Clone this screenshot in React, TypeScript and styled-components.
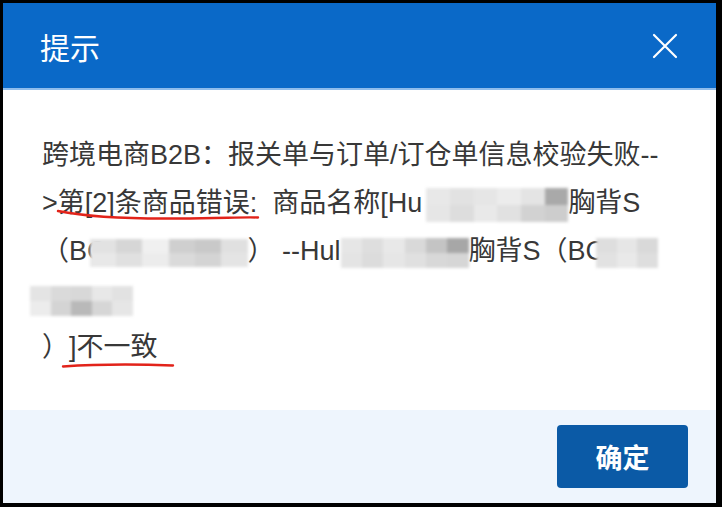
import React from 'react';
import styled, { createGlobalStyle } from 'styled-components';

const GlobalStyle = createGlobalStyle`
  html, body {
    margin: 0;
    padding: 0;
    background: #000;
  }
  #root {
    display: flex;
  }
`;

const Dialog = styled.section`
  margin: 3px 6px 4px 3px;
  width: 713px;
  height: 500px;
  background: #fff;
  display: flex;
  flex-direction: column;
  font-family: "Liberation Sans", "Noto Sans CJK SC", sans-serif;
`;

const Header = styled.header`
  height: 85px;
  flex: none;
  background: #0a69c8;
  border-bottom: 2px solid #8fbdec;
  display: flex;
  align-items: center;
  justify-content: space-between;
  padding: 0 38px 0 37px;
`;

const Title = styled.h2`
  margin: 0;
  color: #fff;
  font-family: "Noto Sans CJK SC", sans-serif;
  font-weight: 400;
  font-size: 30px;
  line-height: 1;
`;

const CloseButton = styled.button`
  border: 0;
  padding: 0;
  background: transparent;
  width: 26px;
  height: 26px;
  display: flex;
  align-items: center;
  justify-content: center;
  cursor: pointer;
`;

const Body = styled.div`
  flex: 1;
  padding: 41px 30px 0 39px;
  color: #383838;
  font-size: 27px;
  line-height: 48px;
  text-spacing-trim: space-all;
`;

const Line = styled.div`
  white-space: nowrap;
`;

const Mark = styled.span`
  position: relative;
`;

const Scribble = styled.svg<{ $left: number; $top: number }>`
  position: absolute;
  left: ${({ $left }) => $left}px;
  top: calc(100% + ${({ $top }) => $top}px);
  overflow: visible;
  pointer-events: none;
`;

const Blur = styled.span<{ $w: number; $h: number; $cols: number; $shift?: number }>`
  display: inline-grid;
  grid-template-columns: repeat(${({ $cols }) => $cols}, 1fr);
  grid-template-rows: 1fr 1fr;
  width: ${({ $w }) => $w}px;
  height: ${({ $h }) => $h}px;
  margin-left: ${({ $shift }) => $shift || 0}px;
  vertical-align: middle;
  filter: blur(1.4px);
`;

const Cell = styled.span<{ $c: string }>`
  background: #${({ $c }) => $c};
`;

const Footer = styled.footer`
  height: 93px;
  flex: none;
  background: #eef5fd;
  display: flex;
  align-items: center;
  justify-content: flex-end;
  padding-right: 28px;
`;

const Confirm = styled.button`
  width: 131px;
  height: 63px;
  border: 0;
  border-radius: 4px;
  background: #0b5aa6;
  color: #fff;
  font-family: "Noto Sans CJK SC", sans-serif;
  font-size: 27px;
  font-weight: 700;
  cursor: pointer;
`;

const Pixelated = ({ w, h = 30, shift, cells }: { w: number; h?: number; shift?: number; cells: string }) => {
  const list = cells.split(' ');
  return (
    <Blur $w={w} $h={h} $cols={list.length / 2} $shift={shift}>
      {list.map((c, i) => <Cell key={i} $c={c} />)}
    </Blur>
  );
};

const App = () => (
  <>
    <GlobalStyle />
    <Dialog>
      <Header>
        <Title>提示</Title>
        <CloseButton aria-label="关闭">
          <svg width="26" height="26" viewBox="0 0 26 26">
            <path d="M2 2 L24 24 M24 2 L2 24" stroke="#fff" strokeWidth="2.2" strokeLinecap="round" />
          </svg>
        </CloseButton>
      </Header>

      <Body>
        <Line>跨境电商B2B：报关单与订单/订仓单信息校验失败--</Line>
        <Line>
          &gt;
          <Mark>
            第[2]条商品错误
            <Scribble $left={0} $top={-8} width="200" height="12">
              <path d="M0 1 C 30 7, 70 9, 120 8.5 S 185 7, 200 7.5" fill="none" stroke="#e2231a" strokeWidth="2.4" strokeLinecap="round" />
            </Scribble>
          </Mark>
          :&nbsp; 商品名称[Hu
          <Pixelated w={142} h={34} shift={4} cells="e8e8e8 e2e2e2 e6e6e6 ececec e4e4e4 a9a9a9 e6e6e6 dddddd e9e9e9 e1e1e1 d2d2d2 cdcdcd" />
          胸背S
        </Line>
        <Line>
          （BC
          <Pixelated w={158} h={28} shift={-17} cells="e2e2e2 d6d6d6 f0f0f0 cfcfcf c9c9c9 e0e0e0 e8e8e8 e0e0e0 ececec dadada d4d4d4 e4e4e4" />
          ） --Hul
          <Pixelated w={128} h={30} cells="e6e6e6 dedede e8e8e8 d9d9d9 c4c4c4 a7a7a7 e4e4e4 dcdcdc e6e6e6 e0e0e0 d8d8d8 d6d6d6" />
          胸背S（BC
          <Pixelated w={62} h={30} shift={-9} cells="dedede e6e6e6 d9d9d9 e2e2e2 e9e9e9 dedede" />
        </Line>
        <Line>
          <Pixelated w={103} h={30} shift={-12} cells="e4e4e4 dadada d8d8d8 e8e8e8 e2e2e2 ececec d4d4d4 b9b9b9 d6d6d6 e6e6e6" />
        </Line>
        <Line>
          <Mark>
            ）]不一致
            <Scribble $left={21} $top={1} width="110" height="8">
              <path d="M0 3.5 C 30 1.5, 70 1, 110 2.5" fill="none" stroke="#e2231a" strokeWidth="2.4" strokeLinecap="round" />
            </Scribble>
          </Mark>
        </Line>
      </Body>

      <Footer>
        <Confirm>确定</Confirm>
      </Footer>
    </Dialog>
  </>
);

export default App;
